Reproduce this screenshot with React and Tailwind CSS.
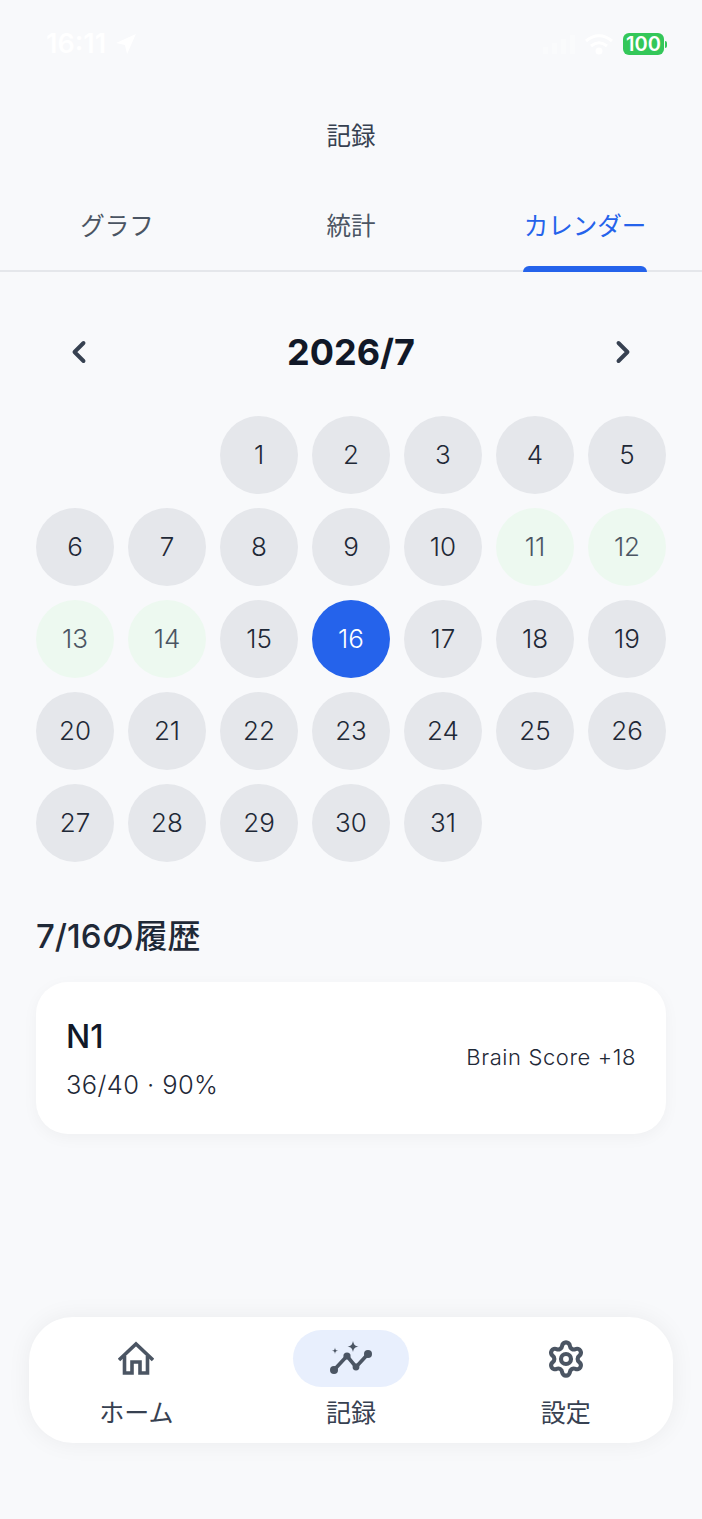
import { ChevronLeft, ChevronRight, Settings } from "lucide-react";

const days = Array.from({ length: 31 }, (_, i) => i + 1);
const doneDays = [11, 12, 13, 14];

function HomeIcon() {
  return (
    <svg width="36" height="36" viewBox="0 0 36 36" fill="none" stroke="#4b5563" strokeWidth="3.6">
      <path d="M1 19 18 3l17 16" />
      <path d="M6.500 15v17h7.500V21h8v11h7.500V15" />
    </svg>
  );
}

function ChartIcon() {
  return (
    <svg width="44" height="36" viewBox="0 0 44 36">
      <path d="M5 29 18 15l9 11 12-13" fill="none" stroke="#4b5563" strokeWidth="3.6" />
      <circle cx="5" cy="29" r="4" fill="#4b5563" />
      <circle cx="18" cy="15" r="3.600" fill="#4b5563" />
      <circle cx="27" cy="26" r="3.400" fill="#4b5563" />
      <circle cx="39" cy="13" r="4" fill="#4b5563" />
      <path d="M24 0c.8 3.800 1.800 4.800 5.500 5.500-3.700.8-4.700 1.800-5.500 5.500-.8-3.700-1.800-4.700-5.500-5.500 3.700-.7 4.700-1.700 5.500-5.500Z" fill="#4b5563" />
      <path d="M6 6.500c.3 2.400.9 3 3.300 3.300-2.400.3-3 .9-3.300 3.300-.3-2.400-.9-3-3.300-3.300 2.400-.3 3-.9 3.300-3.300Z" fill="#4b5563" />
    </svg>
  );
}

function DayCell({ day }) {
  let tone = "bg-[#e5e7eb] text-[#1f2937]";
  if (day === 16) tone = "bg-[#2563eb] text-white";
  else if (doneDays.includes(day)) tone = "bg-[#edf9f0] text-[#4b5563]";

  return (
    <div className={`flex h-[78px] w-[78px] items-center justify-center rounded-full pb-[1px] text-[26px] font-[350] ${tone}`}>
      {day}
    </div>
  );
}

export default function App() {
  return (
    <div className="flex min-h-[1519px] flex-col bg-[#f8f9fb] font-['Inter','Noto_Sans_CJK_JP',sans-serif] text-[#111827]">
      {/* status bar, mostly white on the pale page */}
      <div className="flex h-[88px] items-center justify-between pl-[46px] pr-[35px] text-white">
        <div className="flex items-center gap-[9px] text-[27px] font-semibold">
          16:11
          <svg width="22" height="22" viewBox="0 0 20 20" fill="white">
            <path d="M19 1 1 9l8 2 2 8Z" />
          </svg>
        </div>
        <div className="flex items-center gap-[9px]">
          <svg width="32" height="20" viewBox="0 0 32 20" fill="white" className="opacity-40">
            <rect x="0" y="13" width="5" height="7" rx="1" />
            <rect x="9" y="9" width="5" height="11" rx="1" />
            <rect x="18" y="5" width="5" height="15" rx="1" />
            <rect x="27" y="1" width="5" height="19" rx="1" />
          </svg>
          <svg width="30" height="22" viewBox="0 0 30 22" fill="none" stroke="white" strokeWidth="3">
            <path d="M2 8c8-7 18-7 26 0M7 13c5-4 11-4 16 0" />
            <circle cx="15" cy="18" r="2" fill="white" />
          </svg>
          <div className="flex items-center">
            <div className="flex h-[22px] w-[41px] items-center justify-center rounded-[6px] bg-[#34c759] text-[20px] font-semibold leading-none">
              100
            </div>
            <div className="ml-[1px] h-[7px] w-[2px] rounded-r-full bg-[#34c759]" />
          </div>
        </div>
      </div>

      <h1 className="mt-[32px] text-center text-[24.500px] leading-[32px] text-[#374151]">記録</h1>

      <div className="mt-[44px] grid h-[76px] grid-cols-3 border-b-2 border-[#e5e7eb]">
        <div className="pt-[14px] text-center text-[24.500px] leading-[32px] text-[#4b5563]">グラフ</div>
        <div className="pt-[14px] text-center text-[24.500px] leading-[32px] text-[#4b5563]">統計</div>
        <div className="relative pt-[14px] text-center text-[24.500px] leading-[32px] text-[#2563eb]">
          カレンダー
          <div className="absolute bottom-[-2px] left-[55px] h-[6px] w-[124px] rounded-t-[6px] bg-[#2563eb]" />
        </div>
      </div>

      <div className="mt-[56px] flex h-[48px] items-center justify-between px-[61px]">
        <ChevronLeft size={36} strokeWidth={2.6} className="text-[#374151]" />
        <div className="text-[36px] font-bold leading-[48px] text-[#111827]">2026/7</div>
        <ChevronRight size={36} strokeWidth={2.6} className="text-[#374151]" />
      </div>

      <div className="mt-[40px] grid grid-cols-[repeat(7,78px)] gap-[14px] px-[36px]">
        <div className="col-span-2" />
        {days.map((d) => (
          <DayCell key={d} day={d} />
        ))}
      </div>

      <h2 className="mt-[54px] px-[36px] text-[33px] font-medium leading-[40px] text-[#1f2937]">7/16の履歴</h2>

      <div className="mx-[36px] mt-[26px] flex h-[152px] items-center justify-between rounded-[32px] bg-white px-[30px] shadow-[0_4px_16px_rgba(0,0,0,0.04)]">
        <div className="pt-[2px]">
          <div className="text-[32px] font-medium leading-[40px] text-[#111827]">N1</div>
          <div className="mt-[11px] text-[25.500px] font-light leading-[34px] tracking-[0.4px] text-[#1f2937]">36/40 · 90%</div>
        </div>
        <div className="pb-[2px] text-[22px] font-light leading-[30px] tracking-[0.6px] text-[#1f2937]">Brain Score +18</div>
      </div>

      <div className="mx-[29px] mb-[76px] mt-auto grid h-[126px] grid-cols-3 rounded-[44px] bg-white shadow-[0_0_24px_rgba(0,0,0,0.06)]">
        <div className="flex flex-col items-center pt-[13px]">
          <div className="flex h-[57px] w-[116px] items-center justify-center"><HomeIcon /></div>
          <div className="mt-[10px] text-[25px] leading-[32px] text-[#374151]">ホーム</div>
        </div>
        <div className="flex flex-col items-center pt-[13px]">
          <div className="flex h-[57px] w-[116px] items-center justify-center rounded-full bg-[#e8effd]"><ChartIcon /></div>
          <div className="mt-[10px] text-[25px] leading-[32px] text-[#374151]">記録</div>
        </div>
        <div className="flex flex-col items-center pt-[13px]">
          <div className="flex h-[57px] w-[116px] items-center justify-center">
            <Settings size={40} strokeWidth={2.500} className="text-[#4b5563]" />
          </div>
          <div className="mt-[10px] text-[25px] leading-[32px] text-[#374151]">設定</div>
        </div>
      </div>
    </div>
  );
}
